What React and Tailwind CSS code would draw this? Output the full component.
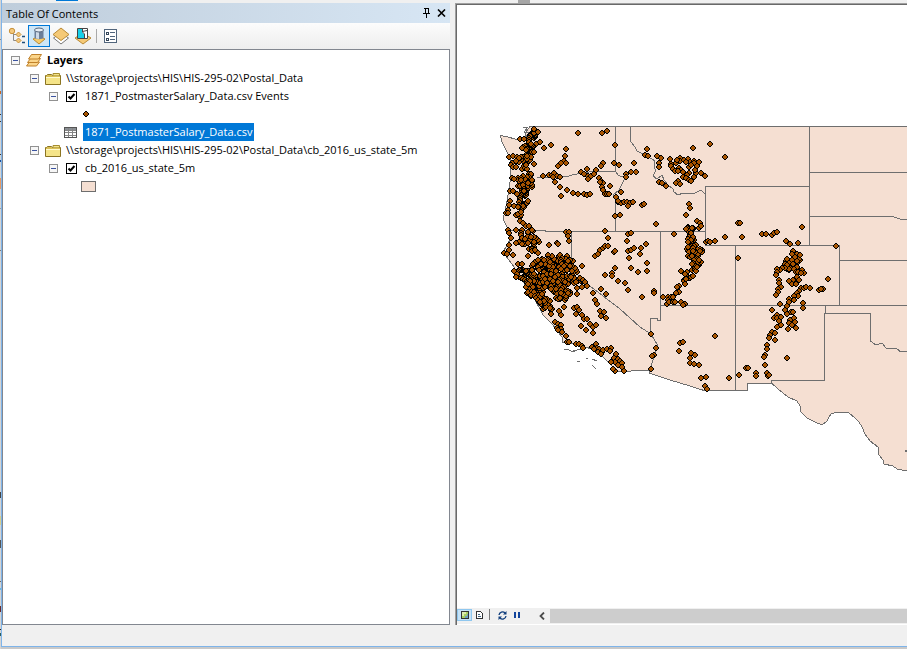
import clsx from 'clsx'

// marker positions, in map pixels
const POINTS = {
  washington: [
    [534,129],[538,132],[520,139],[524,139],[551,145],[544,148],[566,149],[578,133],[602,133],[607,131],[615,145],
    [565,156],[564,161],[561,163],[566,163],[558,166],[614,163],[619,165],[603,163],[601,166],[596,170],[587,169],
    [581,172],[584,174],[588,176],[588,179],[591,176],[594,174],[534,164],[540,142],
    [509,157],[513,156],[517,157],[521,157],[512,163],[511,165],[513,167],[516,161],[519,158],[516,167],[512,178],[514,179],
  ],
  oregon: [
    [543,176],[549,175],[552,175],[554,173],[557,176],[560,177],[553,177],[555,182],[560,187],[561,196],[567,190],
    [573,193],[578,194],[584,194],[587,195],[590,194],[599,178],[601,181],[603,183],[600,182],[602,187],[603,190],
    [605,194],[607,194],[609,194],[610,186],[510,191],[513,191],[517,194],[510,201],[509,205],[514,206],[518,207],
    [508,210],[506,213],[508,213],[516,215],[518,214],[521,212],[520,221],[523,223],[526,226],[529,226],[532,230],[605,231],
  ],
  idaho: [
    [621,192],[616,197],[618,202],[621,203],[624,202],[627,202],[630,203],[633,202],[628,206],[618,201],[615,216],
    [620,215],[626,174],[631,172],[636,172],[626,177],[634,163],[642,205],[644,204],[656,224],[689,204],[690,208],
    [686,215],[697,221],[700,223],[699,228],[701,226],
  ],
  montana: [
    [710,144],[693,148],[725,157],[647,149],[645,155],[648,156],[657,156],[661,158],[659,163],[659,167],[659,182],
    [662,183],[666,186],[670,159],[671,164],[671,166],[673,169],[676,163],[675,171],[680,158],[680,161],[677,160],
    [684,160],[688,159],[690,162],[686,162],[694,161],[699,162],[697,166],[694,163],[689,167],[691,165],[679,168],
    [681,170],[678,171],[683,172],[689,173],[687,175],[696,173],[695,170],[701,173],[705,176],[694,177],[683,177],
    [686,178],[689,180],[691,181],[678,181],[676,183],[680,184],[738,223],[740,223],
  ],
  california: [
    [508,230],[509,233],[516,230],[511,238],[516,243],[509,245],[509,250],[504,253],[507,254],[513,255],[549,245],
    [557,243],[558,244],[528,256],[538,253],[533,264],[518,264],[522,264],[514,271],[516,277],[566,232],[569,232],
    [568,236],[569,241],[582,266],[580,278],[583,280],[585,282],[587,286],[582,287],[577,288],[577,294],[593,293],
    [574,308],[577,307],[579,310],[576,314],[582,315],[584,319],[587,319],[581,326],[586,330],[590,324],[593,327],
    [596,325],[593,333],[564,307],[559,311],[561,315],[551,314],[555,322],[558,324],[561,325],[557,328],[561,329],
    [558,330],[562,332],[566,336],[567,342],[569,342],[576,344],[579,344],[582,346],[583,348],[592,347],[596,344],
    [597,348],[594,349],[599,349],[598,352],[602,352],[601,354],[603,350],[607,349],[611,348],[610,351],[616,354],
    [614,358],[615,362],[611,362],[618,359],[620,361],[622,363],[618,365],[622,367],[615,371],[624,371],[613,369],
  ],
  nevada: [
    [601,289],[606,294],[595,300],[597,304],[600,311],[604,312],[601,316],[606,318],[595,256],[598,254],[600,250],
    [603,248],[605,246],[608,246],[608,238],[614,252],[615,251],[628,234],[631,233],[627,241],[628,251],[631,250],
    [634,248],[629,258],[615,268],[612,273],[612,276],[605,275],[631,268],[638,272],[618,281],[625,283],[628,290],
    [646,244],[641,248],[640,254],[647,263],[647,271],[642,297],[654,291],[654,293],
  ],
  utah: [
    [674,234],[681,271],[685,284],[679,286],[677,287],[679,292],[676,293],[663,297],[668,297],[671,297],[673,297],
    [668,300],[667,304],[669,302],[673,302],[675,302],[681,302],[685,304],[683,305],[693,276],[706,242],[708,241],
    [710,242],[715,241],[725,237],[742,237],[738,258],
  ],
  arizona: [
    [651,334],[656,348],[654,355],[652,356],[651,369],[680,343],[683,342],[679,351],[715,336],[691,353],[695,355],
    [690,358],[690,363],[694,364],[699,365],[701,378],[706,377],[705,386],[707,389],
  ],
  colorado: [
    [802,227],[762,234],[766,234],[772,235],[774,233],[777,232],[786,241],[790,244],[798,243],[836,246],[793,251],
    [792,254],[797,254],[800,255],[795,257],[797,261],[792,260],[787,259],[789,263],[787,265],[793,264],[797,267],
    [789,269],[785,268],[782,268],[780,270],[777,269],[777,272],[776,275],[794,269],[796,272],[798,272],[802,270],
    [804,273],[797,277],[801,273],[799,280],[793,280],[789,281],[792,284],[796,284],[779,280],[779,283],[781,287],
    [778,289],[778,292],[776,295],[828,279],[823,289],[819,290],[821,289],[801,288],[804,288],[806,287],[810,288],
    [799,291],[797,293],[798,296],[794,296],[789,299],[794,300],[789,302],[787,306],[780,304],[803,303],
  ],
  newMexico: [
    [803,308],[772,310],[785,310],[787,314],[791,312],[793,312],[777,315],[774,318],[777,318],[781,317],[779,321],
    [781,325],[777,327],[794,318],[790,320],[795,322],[789,323],[792,325],[788,329],[796,328],[772,332],[775,333],
    [770,335],[769,338],[775,340],[767,345],[767,349],[765,355],[764,357],[765,365],[787,358],[729,378],[739,375],
    [746,368],[748,368],[756,373],[756,376],[767,373],[768,376],[769,375],
  ],
}

// areas too crowded to list: centre x, centre y, radius x, radius y, tilt in degrees, count
const CLUSTERS = [
  [533, 138, 5, 9, 10, 20],
  [529, 149, 7, 6, 0, 18],
  [525, 162, 7, 8, 10, 16],
  [530, 175, 4, 4, 0, 7],
  [525, 183, 9, 8, 0, 30],
  [524, 196, 5, 9, 5, 20],
  [521, 209, 4, 9, 0, 8],
  [529, 239, 12, 10, 30, 26],
  [533, 250, 8, 4, 20, 7],
  [553, 262, 17, 8, -8, 52],
  [541, 270, 13, 12, 0, 46],
  [524, 274, 9, 6, 30, 20],
  [534, 288, 11, 9, 50, 42],
  [556, 281, 14, 11, 0, 50],
  [568, 267, 12, 8, 40, 26],
  [562, 294, 9, 8, 0, 28],
  [544, 302, 12, 6, 50, 28],
  [576, 280, 9, 4, 20, 9],
  [690, 230, 4, 5, 0, 12],
  [691, 241, 4, 7, 0, 14],
  [694, 252, 9, 8, 0, 28],
  [696, 265, 5, 7, 20, 16],
  [687, 277, 5, 5, 30, 9],
  [789, 265, 6, 5, 0, 9],
  [797, 262, 4, 9, 0, 8],
]

const scatter = ([cx, cy, rx, ry, tilt, count]) => {
  const a = (tilt * Math.PI) / 180
  return Array.from({ length: count }, (_, i) => {
    const r = Math.sqrt((((i * 7) % count) + 0.5) / count)
    const t = i * 4.1
    const x = r * rx * Math.cos(t)
    const y = r * ry * Math.sin(t)
    return [
      Math.round(cx + x * Math.cos(a) - y * Math.sin(a)),
      Math.round(cy + x * Math.sin(a) + y * Math.cos(a)),
    ]
  })
}

const MARKERS = [...CLUSTERS.flatMap(scatter), ...Object.values(POINTS).flat()]

const LAND =
  'M530 126.5 H915 V474 L907 471 L897 469 L893 466 L884 464 L883 460 L879 455 L878 447 L870 441 L865 434 L862 427 L859 422 L855 418 L849 413 L835 412.5 L831 414 L829 417 L827 421 L822 425 L815 422 L807 418 L801 412 L800 406 L797 401 L788 397 L778 389 L772 383.5 H747.5 V390.5 H704 L690 386 L670 380 L649 373 V371 L640 370.5 L614 372 L612 366 L603 357 L592 349 L578 345 L562 342 V337 L553 325 L543 315 L530 290 L515 273 L514 267 L503 252 L511 238 L507 227 L503 219 L505 212 L508 195 L511 175 L510 157 L507 152 L502 142 L500.5 135.5 L508 137 L515 139 L525 139 L526 132 Z'

const BORDERS = [
  'M615.5 126 V171.5 H593 L582 173 L572 175 L566 177 L560 176.5 L545 177.5 L537 177.5',
  'M615.5 171 L618 175 L625 178 L619 190 L613 195 L615.5 197 V231',
  'M630.5 126 V141 L635 147 L637 151 L647 156 L655 161 L654 168 L656 170 L653 176 L657 179 L662 175 L664 180 L668 185 L673 189 L674 192 L678 195 L683 193 L695 193 L701 190 L705 194',
  'M809.5 126 V245 M705.5 245 V186.5 H809.5',
  'M508 230.5 H545 V231.5 H705',
  'M571.5 231 V269 L590 286 L620 309 L640 327 L651 334',
  'M660.5 231 V320 H657 V318.5 H650.5 L651 334 L658 346 L655 353 L652 363 L649 371',
  'M705 245.5 H839.5 V305.5',
  'M660 305.5 H910',
  'M735.5 245 V390',
  'M809.5 172.5 H910',
  'M809.5 216.5 H892 L900 219 H910',
  'M839.5 260.5 H910',
  'M825.5 305 V313.5',
  'M771.5 383 V380.5 H824.5 V313.5 H870.5 V341 L876 345 L882 343 L886 348 L897 349 L901 352 L910 351',
]

function StateMap() {
  return (
    <svg viewBox="457 5 450 602" preserveAspectRatio="xMinYMin slice" className="block h-full w-full" shapeRendering="crispEdges">
      <defs>
        <g id="marker">
          <path d="M-1 -3 H1 V-2 H2 V-1 H3 V1 H2 V2 H1 V3 H-1 V2 H-2 V1 H-3 V-1 H-2 V-2 H-1 Z" fill="#000" />
          <path d="M-1 -2 H1 V-1 H2 V1 H1 V2 H-1 V1 H-2 V-1 H-1 Z" fill="#a85400" />
        </g>
      </defs>
      <path d={LAND} fill="#f5dfd2" stroke="#6e6e6e" strokeWidth="1" />
      <g fill="none" stroke="#6e6e6e" strokeWidth="1">
        {BORDERS.map((d) => <path key={d} d={d} />)}
        <path d="M523 127 H528 L524 132 L529 133 L526 136 H530" />
        <path d="M564 349.5 H568 L571 351 H575 M573 350.5 L582 349.5 M577 361.5 H580 M586 358.5 H588 M592 359 L597 361 M592 365 L596 369" />
        <path d="M905 451 H910" strokeWidth="2" />
      </g>
      {MARKERS.map(([x, y], i) => <use key={i} href="#marker" x={x} y={y} />)}
    </svg>
  )
}

/* ---------- icons ---------- */

function DrawingOrderIcon() {
  return (
    <svg width="18" height="18" viewBox="0 0 18 18">
      <path d="M5.500 6v7.500h4M5.500 7.500h4" fill="none" stroke="#8a8a8a" />
      <circle cx="4" cy="4" r="2.700" fill="#f3c87c" stroke="#c8923c" />
      <path d="m10.500 5 2.500 2.500-2.500 2.500L8 7.500z" fill="#f3c87c" stroke="#c8923c" />
      <path d="m10.500 11 2.500 2.500-2.500 2.500L8 13.500z" fill="#f3c87c" stroke="#c8923c" />
      <path d="M14 9.500h3M14 15.500h3" stroke="#1e4e79" strokeWidth="1.500" />
    </svg>
  )
}

function SourceIcon() {
  return (
    <svg width="18" height="18" viewBox="0 0 18 18">
      <path d="m3 12 6-3 6 3-6 5z" fill="#f6cb6b" stroke="#b98a35" />
      <path d="M4.500 3v7.500c0 2.200 9 2.200 9 0V3z" fill="#6b7f99" />
      <path d="M6 4h3v8l-3-.5z" fill="#cdd9e6" />
      <ellipse cx="9" cy="3" rx="4.500" ry="2" fill="#e6edf4" stroke="#56677d" />
    </svg>
  )
}

function VisibilityIcon() {
  return (
    <svg width="18" height="18" viewBox="0 0 18 18">
      <path d="m1.500 11 7.500 6 7.500-6L9 6z" fill="#fff" stroke="#777" />
      <path d="m1 7.500 8-6.500 8 6.500L9 13.500z" fill="#f5c976" stroke="#b98a35" />
    </svg>
  )
}

function SelectionIcon() {
  return (
    <svg width="18" height="18" viewBox="0 0 18 18">
      <path d="m1 11 8-5 8 5-8 6z" fill="#f5c976" stroke="#b98a35" />
      <path d="M3.500 1.500h10v10h-10z" fill="#fff" stroke="#454545" />
      <path d="M4 2h4v3l2 2v4H4z" fill="#17cfe8" />
      <path d="M8.500 2v3l2 2v4.500M8.500 4.500l4.500-1" fill="none" stroke="#454545" />
    </svg>
  )
}

function OptionsIcon() {
  return (
    <svg width="14" height="14" viewBox="0 0 14 14" shapeRendering="crispEdges">
      <path d="M.5.5h12v13H.5z" fill="#fff" stroke="#51657c" />
      <path d="M6 3.500h5M6 7h5M6 10.500h5" stroke="#51657c" />
      <path d="M2.500 3h2v2h-2zM2.500 9h2v2h-2z" fill="none" stroke="#34465a" />
    </svg>
  )
}

function LayersIcon() {
  return (
    <svg width="16" height="14" viewBox="0 0 16 14" className="shrink-0">
      <g fill="#fbd58a" stroke="#c0812a">
        <path d="M3.500 9h10l-3 4H.500z" />
        <path d="M4.500 5.500h10l-3 4H1.500z" />
        <path d="M5.500 1.500h10l-3 4.500H2.500z" />
      </g>
    </svg>
  )
}

function FolderIcon() {
  return (
    <svg width="16" height="13" viewBox="0 0 16 13" className="shrink-0">
      <path d="M.5 12.500v-9h1l1-1h4l1 1h8v9z" fill="#d9bf55" stroke="#8b7422" />
      <path d="M8 3.500v-2h6.500v2" fill="#f5e488" stroke="#a68d30" />
      <path d="M1 6h14v6H1z" fill="#f5e488" />
      <path d="M1 5.500h14" stroke="#fffad0" />
    </svg>
  )
}

function TableIcon() {
  return (
    <svg width="13" height="11" viewBox="0 0 13 11" shapeRendering="crispEdges" className="shrink-0">
      <path d="M.5.5h12v10H.5z" fill="#fff" stroke="#555" />
      <path d="M1 1h11v2H1z" fill="#8a8f94" />
      <path d="M1 3.500h11M1 5.500h11M1 8h11M4.500 1v9M8.500 1v9" stroke="#858585" />
    </svg>
  )
}

/* ---------- contents tree ---------- */

function Expander({ label }) {
  return (
    <button aria-label={`Collapse ${label}`} className="mt-px flex h-[9px] w-[9px] shrink-0 items-center justify-center border border-[#919191] bg-[#f6f6f6]">
      <span className="h-px w-[5px] bg-[#3b53a0]" />
    </button>
  )
}

function GroupRow({ icon, label, bold, nested }) {
  return (
    <li className={clsx('flex h-[18px] items-center', nested ? 'pl-[27px]' : 'pl-2')}>
      <Expander label={label} />
      <span className="ml-1.5 flex">{icon}</span>
      <span className={clsx('ml-[5px] whitespace-pre', bold && 'font-bold')}>{label}</span>
    </li>
  )
}

function LayerRow({ id, label }) {
  return (
    <li className="flex h-[18px] items-center pl-[46px]">
      <Expander label={label} />
      <span className="relative ml-2 flex">
        <input id={id} type="checkbox" defaultChecked className="peer h-[11px] w-[11px] appearance-none border border-black bg-white" />
        <svg viewBox="0 0 11 11" className="pointer-events-none absolute inset-0 hidden peer-checked:block">
          <path d="M2.500 5.500 4.500 7.500 8.500 3" fill="none" stroke="#000" strokeWidth="2" />
        </svg>
      </span>
      <label htmlFor={id} className="ml-2 whitespace-pre">{label}</label>
    </li>
  )
}

function ToolButton({ label, active, children }) {
  return (
    <button
      aria-label={label}
      className={clsx('flex h-[22px] w-[22px] items-center justify-center border',
        active ? 'border-[#0078d7] bg-[#cde6f7]' : 'border-transparent')}
    >
      {children}
    </button>
  )
}

function TableOfContents() {
  return (
    <section className="flex w-[448px] shrink-0 flex-col">
      <header className="flex h-5 items-center bg-linear-to-r from-[#bfcddb] to-[#d7e6f4] pl-1 pr-px">
        <h1 className="flex-1 pt-px">Table Of Contents</h1>
        <button aria-label="Auto hide" className="flex h-4 w-[15px] items-center justify-center">
          <svg width="8" height="10" viewBox="0 0 8 10" shapeRendering="crispEdges">
            <path d="M1 .5h5M2.500 0v5M5 0v5M0 5.500h7M3.500 6v3.500" fill="none" stroke="#000" />
          </svg>
        </button>
        <button aria-label="Close" className="flex h-4 w-[15px] items-center justify-center">
          <svg width="9" height="8" viewBox="0 0 9 8">
            <path d="m1 .5 7 7M8 .5l-7 7" stroke="#000" strokeWidth="1.600" />
          </svg>
        </button>
      </header>

      <div className="flex h-[26px] items-center bg-linear-to-b from-[#fcfcfc] to-[#eeeeee] pl-1">
        <ToolButton label="List By Drawing Order"><DrawingOrderIcon /></ToolButton>
        <ToolButton label="List By Source" active><SourceIcon /></ToolButton>
        <ToolButton label="List By Visibility"><VisibilityIcon /></ToolButton>
        <ToolButton label="List By Selection"><SelectionIcon /></ToolButton>
        <span className="ml-0.5 mr-[3px] h-3.5 w-px bg-[#a9a9a9]" />
        <ToolButton label="Options"><OptionsIcon /></ToolButton>
      </div>

      <ul className="flex-1 border border-[#828790] bg-white pt-px">
        <GroupRow icon={<LayersIcon />} label="Layers" bold />
        <GroupRow icon={<FolderIcon />} label={'\\\\storage\\projects\\HIS\\HIS-295-02\\Postal_Data'} nested />
        <LayerRow id="events" label="1871_PostmasterSalary_Data.csv Events" />
        <li className="flex h-[18px] items-center pl-20">
          <svg width="6" height="6" viewBox="-3 -3 6 6" shapeRendering="crispEdges">
            <use href="#marker" />
          </svg>
        </li>
        <li className="flex h-[18px] items-center pl-[61px]">
          <TableIcon />
          <span className="ml-1.5 h-[18px] bg-[#0078d7] px-0.5 leading-[18px] text-white">1871_PostmasterSalary_Data.csv</span>
        </li>
        <GroupRow icon={<FolderIcon />} label={'\\\\storage\\projects\\HIS\\HIS-295-02\\Postal_Data\\cb_2016_us_state_5m'} nested />
        <LayerRow id="states" label="cb_2016_us_state_5m" />
        <li className="flex h-[18px] items-center pl-[78px]">
          <span className="h-[11px] w-[15px] border border-[#6e6e6e] bg-[#f5dfd2]" />
        </li>
      </ul>
    </section>
  )
}

function MapPane() {
  return (
    <section className="flex min-w-0 flex-1 border-l border-t border-[#a0a0a0]">
      <div className="flex min-w-0 flex-1 flex-col border-l border-t border-[#696969]">
        <div className="min-h-0 flex-1 bg-white">
          <StateMap />
        </div>
        <div className="flex h-[18px] shrink-0 items-start border-y border-white bg-[#f0f0f0] pt-px">
          <button aria-label="Data View" className="flex h-3 w-[15px] items-center justify-center border border-[#8fc7ef] bg-[#c5e2f7]">
            <svg width="8" height="8" viewBox="0 0 8 8" shapeRendering="crispEdges">
              <path d="M.5.5h7v7h-7z" fill="#a9cf62" stroke="#333" />
              <path d="M1 5h2V3h2V1H1z" fill="#dcecae" />
              <path d="M4 7V5h2V3h1v4z" fill="#6d9dbe" />
            </svg>
          </button>
          <button aria-label="Layout View" className="flex h-3 w-[15px] items-center justify-center">
            <svg width="7" height="8" viewBox="0 0 7 8" shapeRendering="crispEdges">
              <path d="M.5.5h4l2 2v5h-6z" fill="#fff" stroke="#333" />
              <path d="M2 3.500h2M2 5.500h3" stroke="#42637f" />
            </svg>
          </button>
          <span className="mx-0.5 h-[11px] w-px bg-[#7a7a7a]" />
          <button aria-label="Refresh" className="ml-0.5 flex h-3 w-4 items-center justify-center">
            <svg width="9" height="9" viewBox="0 0 9 9">
              <path d="M1 4a3.500 3.500 0 0 1 6-2M8 5a3.500 3.500 0 0 1-6 2" fill="none" stroke="#0f3d7c" strokeWidth="1.300" />
              <path d="M8.500 0v3.500H5zM.5 9V5.500H4z" fill="#0f3d7c" />
            </svg>
          </button>
          <button aria-label="Pause Drawing" className="flex h-3 w-[15px] items-center justify-center">
            <svg width="7" height="6" viewBox="0 0 7 6" shapeRendering="crispEdges">
              <path d="M0 0h2v6H0zM4 0h2v6H4z" fill="#12449c" />
            </svg>
          </button>
          <button aria-label="Scroll left" className="ml-2 flex h-[14px] w-[17px] items-center justify-center">
            <svg width="6" height="8" viewBox="0 0 6 8">
              <path d="M5 .5 1.500 4 5 7.500" fill="none" stroke="#4a4a4a" strokeWidth="1.800" />
            </svg>
          </button>
          <span className="h-[14px] flex-1 bg-[#cdcdcd]" />
        </div>
      </div>
    </section>
  )
}

// slivers of the window behind: top, height, colour
const SLIVERS = [
  [39, 1, '#888'], [91, 3, '#c8641e'], [114, 1, '#333'], [121, 1, '#333'], [154, 1, '#333'], [160, 2, '#1e4f9a'],
  [178, 11, '#e89a62'], [208, 1, '#999'], [250, 1, '#777'], [492, 6, '#444'], [516, 9, '#d8cf8c'],
  [540, 8, '#555'], [581, 1, '#666'], [588, 2, '#6fb7dd'], [606, 6, '#6b2a2a'], [629, 1, '#222'], [633, 3, '#2b5f5f'],
]

export default function App() {
  return (
    <div className="flex min-h-screen overflow-hidden bg-[#d4d4d4] font-['Open_Sans','Noto_Sans',sans-serif] text-[11px] leading-4 text-black">
      <svg width="1" height="649" className="shrink-0" shapeRendering="crispEdges">
        {SLIVERS.map(([y, h, fill]) => <rect key={y} y={y} width="1" height={h} fill={fill} />)}
      </svg>
      <div className="flex min-w-0 flex-1 flex-col">
        <div className="flex min-h-0 flex-1 flex-col border-b border-l border-[#7eb4ea] bg-[#f0f0f0]">
          <div className="flex h-[3px] pl-[54px]">
            <span className="h-px w-[22px] bg-[#0078d7]" />
            <span className="ml-[440px] h-[3px] w-3 bg-[#a6a6a6]" />
          </div>
          <div className="flex min-h-0 flex-1 gap-[5px]">
            <TableOfContents />
            <MapPane />
          </div>
          <footer className="h-[21px]" />
        </div>
        <div className="h-0.5 bg-[#c9c9c9]" />
      </div>
    </div>
  )
}
